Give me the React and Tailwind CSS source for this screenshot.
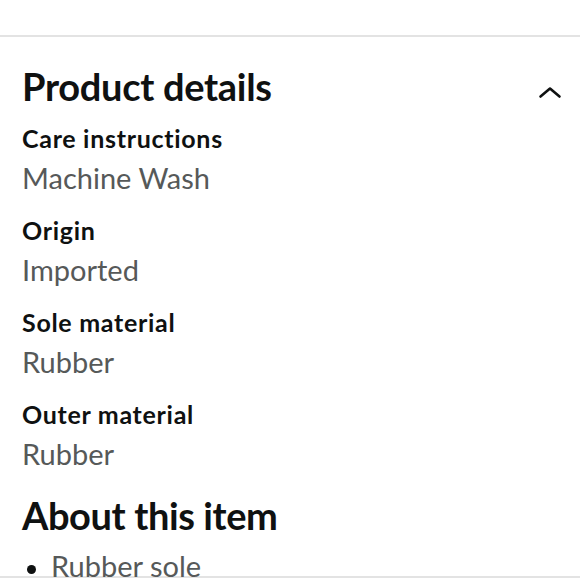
import React from 'react';

const details = [
  { label: 'Care instructions', value: 'Machine Wash' },
  { label: 'Origin', value: 'Imported' },
  { label: 'Sole material', value: 'Rubber' },
  { label: 'Outer material', value: 'Rubber' },
];

const App = () => {
  return (
    <div className="w-[580px] h-[580px] overflow-hidden bg-white font-['Lato',sans-serif] text-[#0f1111]">
      <div className="h-[35px]" />
      <div className="border-t-2 border-[#e3e3e3]" />

      <section className="px-[22px]">
        {/* Product details header */}
        <div className="flex items-start justify-between mt-[27px]">
          <h2 className="text-[38px] leading-[44px] font-bold tracking-[-0.3px]">Product details</h2>
          <svg className="w-[24px] h-[14px] -mr-[4px] mt-[22px]" viewBox="0 0 24 14" fill="none">
            <path d="M2.5 10.5L12 2.5L21.5 10.5" stroke="#0f1111" strokeWidth="2.6" strokeLinecap="round" strokeLinejoin="round" />
          </svg>
        </div>

        <dl className="mt-[12px]">
          {details.map((d) => (
            <div key={d.label} className="mb-[12px]">
              <dt className="text-[25px] leading-[36px] font-bold tracking-[0.7px]">{d.label}</dt>
              <dd className="text-[29px] leading-[44px] text-[#565959]">{d.value}</dd>
            </div>
          ))}
        </dl>

        {/* About this item */}
        <h2 className="text-[38px] leading-[44px] font-bold tracking-[-0.4px] mt-[17px]">About this item</h2>
        <ul className="mt-[11px]">
          <li className="flex items-start h-[28px] text-[29px] leading-[36px] text-[#565959]">
            <span className="w-[9px] h-[9px] rounded-full bg-[#0f1111] ml-[5px] mr-[15px] mt-[17px] shrink-0" />
            Rubber sole
          </li>
        </ul>
      </section>
      <div className="border-t-2 border-[#e3e3e3]" />
    </div>
  );
};

export default App;
